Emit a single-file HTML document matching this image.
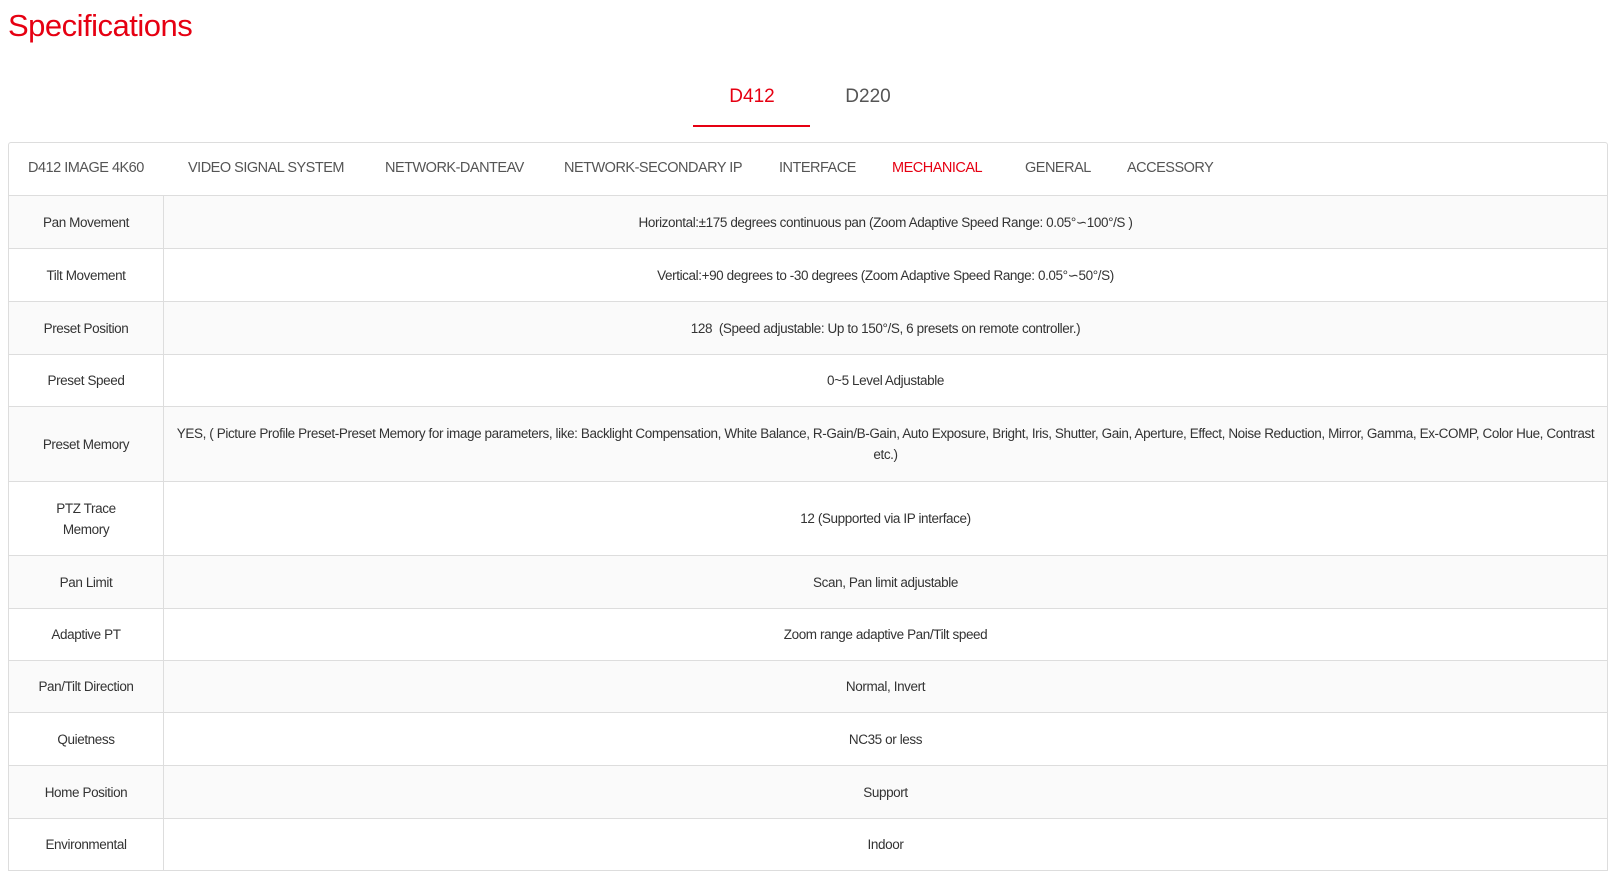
<!DOCTYPE html>
<html><head><meta charset="utf-8"><style>
*{margin:0;padding:0;box-sizing:border-box}
body{width:1618px;height:892px;background:#fff;font-family:"Liberation Sans",Arial,sans-serif;position:relative;overflow:hidden;color:#333}
h1{position:absolute;left:8px;top:8px;font-size:31px;font-weight:normal;color:#e60012;letter-spacing:-0.5px}
.mt{position:absolute;top:86px;font-size:19px;color:#555;transform:translateX(-50%)}
.ul{position:absolute;left:693px;top:125px;width:117px;height:2px;background:#e60012}
.box{position:absolute;left:8px;top:142px;width:1600px;height:729px;border:1px solid #ddd;border-radius:3px 3px 0 0}
.nav{position:absolute;top:160px;font-size:14.5px;color:#555;letter-spacing:-0.5px}
table{position:absolute;left:8px;top:195px;width:1600px;border-collapse:collapse;font-size:13.5px;letter-spacing:-0.4px}
td{border:1px solid #ddd;text-align:center;vertical-align:middle;line-height:21px;padding:0 10px}
td:first-child{width:155px}
tr:nth-child(odd){background:#fafafa}
</style></head><body>
<h1>Specifications</h1>
<div class="mt" style="left:752px;color:#e60012">D412</div>
<div class="mt" style="left:868px">D220</div>
<div class="ul"></div>
<div class="box"></div>
<div class="nav" style="left:28px">D412 IMAGE 4K60</div>
<div class="nav" style="left:188px">VIDEO SIGNAL SYSTEM</div>
<div class="nav" style="left:385px">NETWORK-DANTEAV</div>
<div class="nav" style="left:564px">NETWORK-SECONDARY IP</div>
<div class="nav" style="left:779px">INTERFACE</div>
<div class="nav" style="left:892px;color:#e60012">MECHANICAL</div>
<div class="nav" style="left:1025px">GENERAL</div>
<div class="nav" style="left:1127px">ACCESSORY</div>
<table>
<tr style="height:53px"><td>Pan Movement</td><td>Horizontal:±175 degrees continuous pan (Zoom Adaptive Speed Range: 0.05°∽100°/S )</td></tr>
<tr style="height:53px"><td>Tilt Movement</td><td>Vertical:+90 degrees to -30 degrees (Zoom Adaptive Speed Range: 0.05°∽50°/S)</td></tr>
<tr style="height:53px"><td>Preset Position</td><td>128&nbsp;&nbsp;(Speed adjustable: Up to 150°/S, 6 presets on remote controller.)</td></tr>
<tr style="height:52px"><td>Preset Speed</td><td>0~5 Level Adjustable</td></tr>
<tr style="height:75px"><td>Preset Memory</td><td>YES, ( Picture Profile Preset-Preset Memory for image parameters, like: Backlight Compensation, White Balance, R-Gain/B-Gain, Auto Exposure, Bright, Iris, Shutter, Gain, Aperture, Effect, Noise Reduction, Mirror, Gamma, Ex-COMP, Color Hue, Contrast etc.)</td></tr>
<tr style="height:74px"><td>PTZ Trace<br>Memory</td><td>12 (Supported via IP interface)</td></tr>
<tr style="height:53px"><td>Pan Limit</td><td>Scan, Pan limit adjustable</td></tr>
<tr style="height:52px"><td>Adaptive PT</td><td>Zoom range adaptive Pan/Tilt speed</td></tr>
<tr style="height:52px"><td>Pan/Tilt Direction</td><td>Normal, Invert</td></tr>
<tr style="height:53px"><td>Quietness</td><td>NC35 or less</td></tr>
<tr style="height:53px"><td>Home Position</td><td>Support</td></tr>
<tr style="height:52px"><td>Environmental</td><td>Indoor</td></tr>
</table>
</body></html>
